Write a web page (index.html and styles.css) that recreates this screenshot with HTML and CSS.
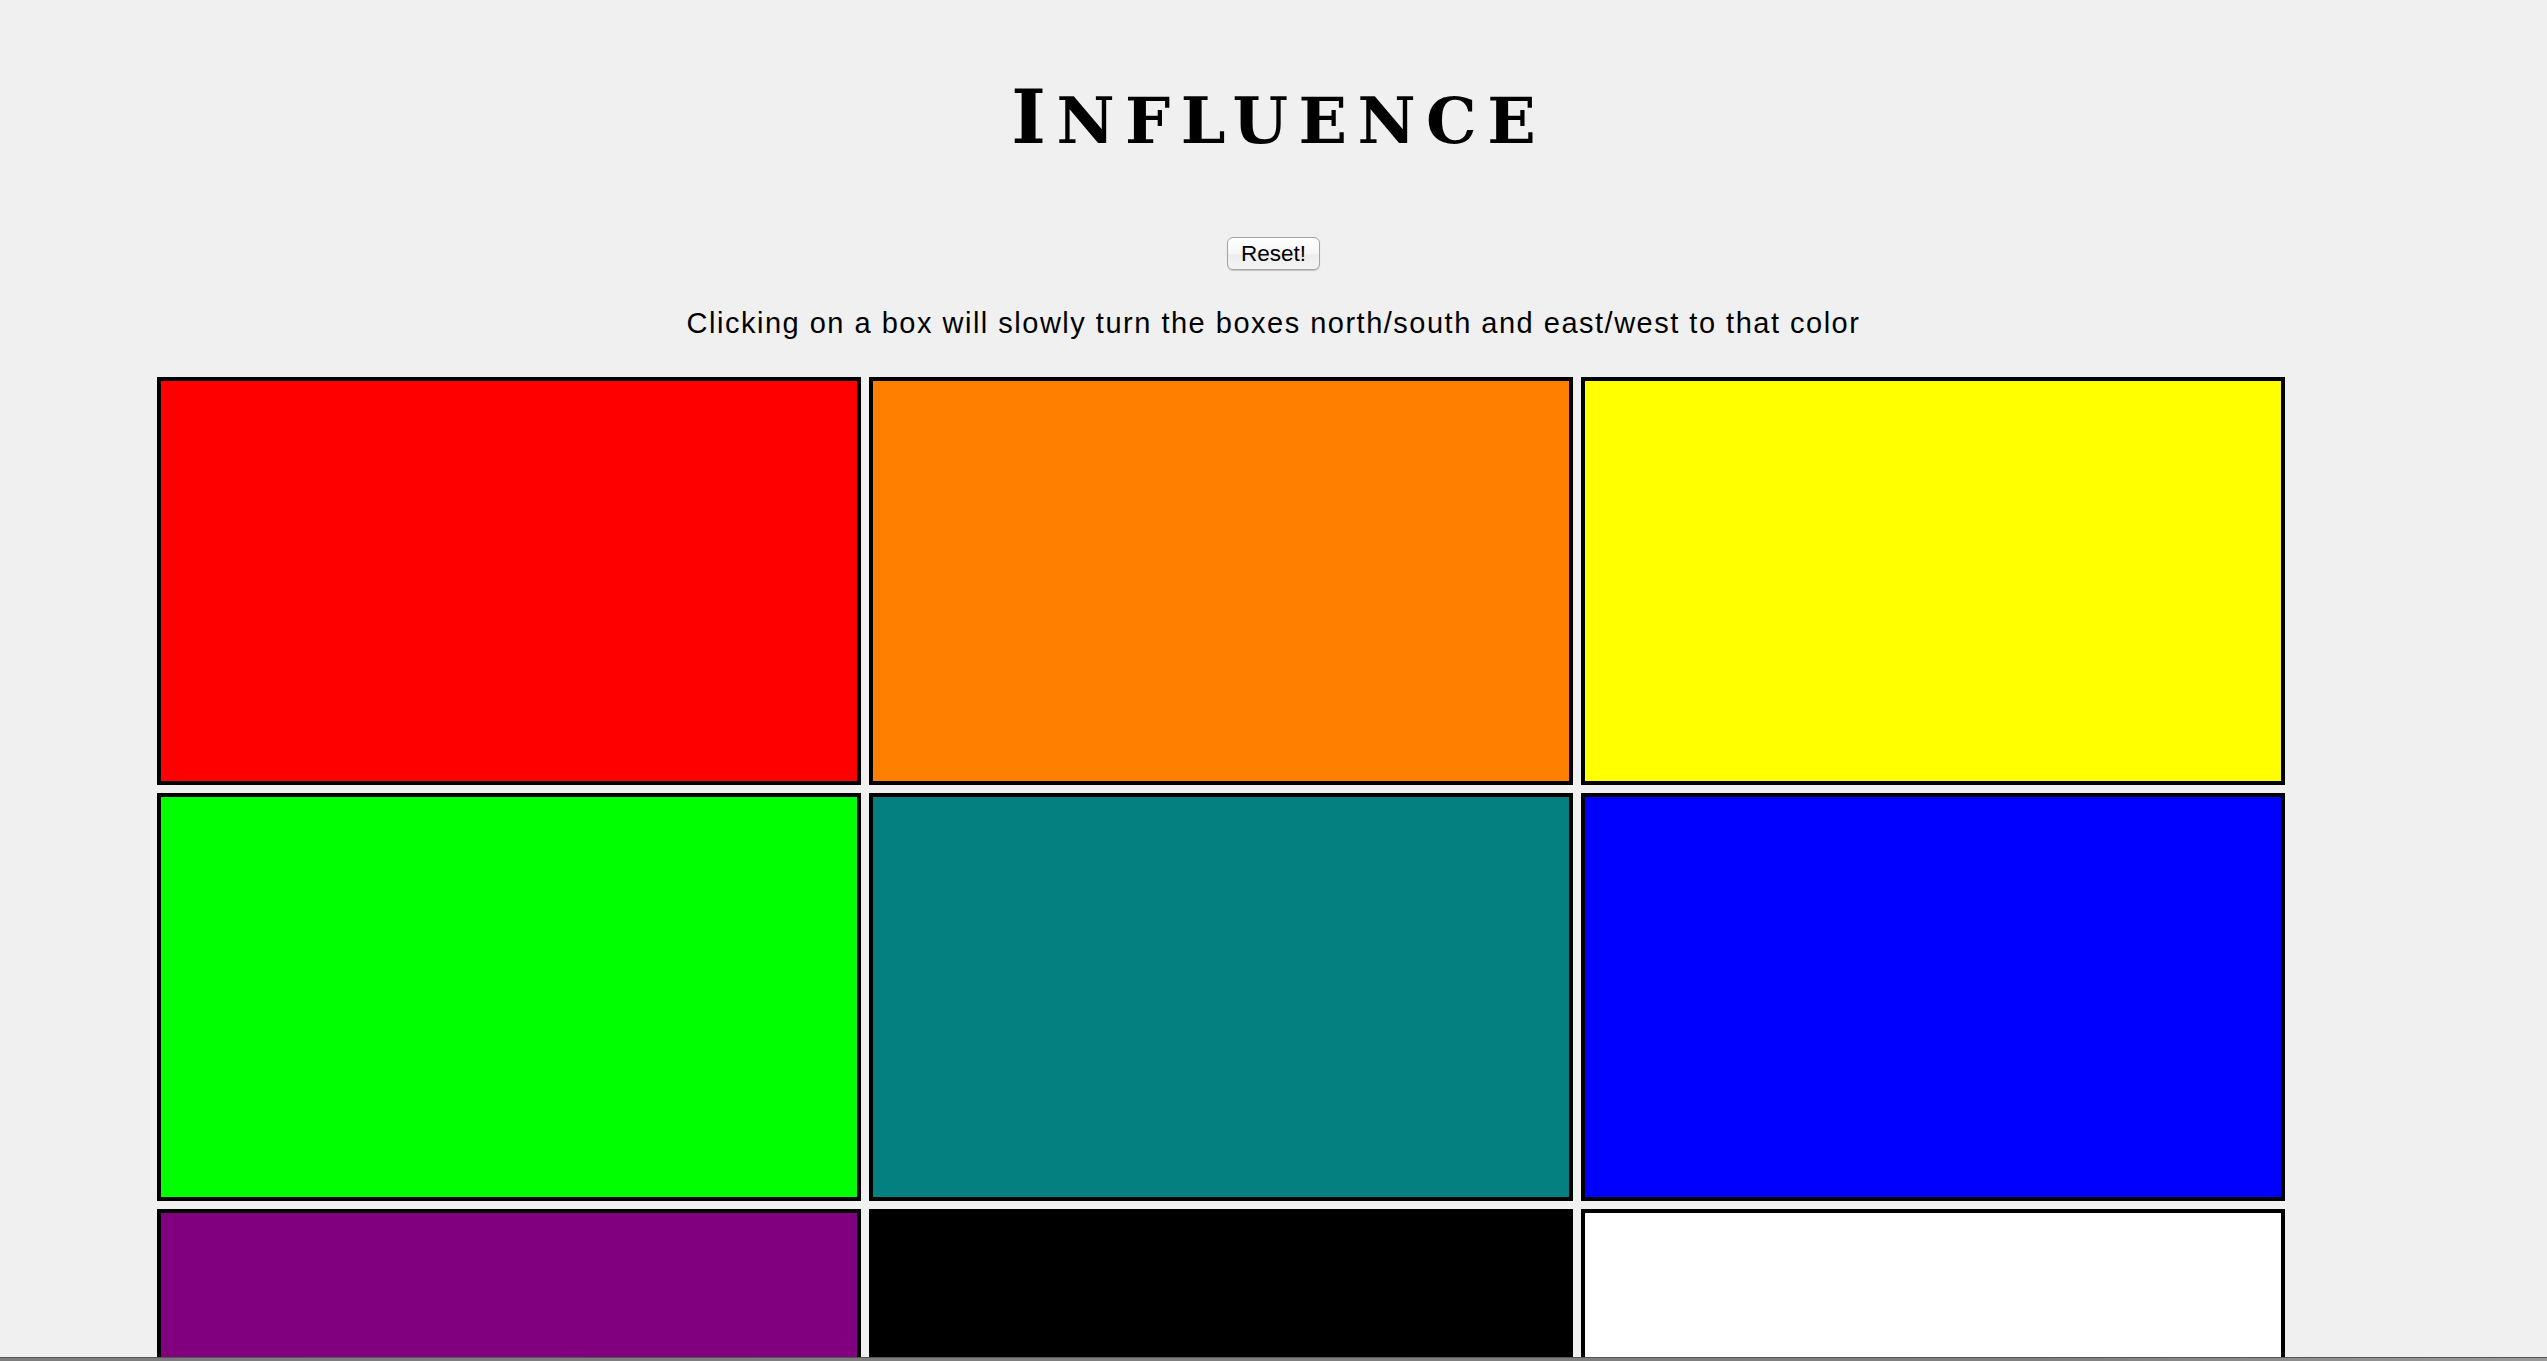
FILE: index.html
```html
<!DOCTYPE html>
<html lang="en">
<head>
<meta charset="utf-8">
<title>Influence</title>
<link rel="stylesheet" href="styles.css">
</head>
<body>
<h1 class="title">I<span class="title-sc">nfluence</span></h1>
<div class="controls"><button class="reset-btn" type="button">Reset!</button></div>
<p class="instructions">Clicking on a box will slowly turn the boxes north/south and east/west to that color</p>
<div class="board">
  <div class="box red"></div>
  <div class="box orange"></div>
  <div class="box yellow"></div>
  <div class="box green"></div>
  <div class="box teal"></div>
  <div class="box blue"></div>
  <div class="box purple"></div>
  <div class="box black"></div>
  <div class="box white"></div>
</div>
<div class="window-edge"></div>
</body>
</html>
```
FILE: styles.css
```css
html {
  overflow: hidden;
}
body {
  margin: 0;
  background: #f0f0f0;
  color: #000;
  font-family: "Liberation Sans", Arial, sans-serif;
}
.title {
  margin: 80px 0 0;
  height: 74px;
  text-align: center;
  text-indent: 10.5px;
  font-family: "DejaVu Serif", "Liberation Serif", serif;
  font-weight: bold;
  font-size: 74px;
  line-height: 74px;
  letter-spacing: 10.5px;
}
.title-sc {
  font-size: 0.86em;
  line-height: 40px;
  text-transform: uppercase;
}
.controls {
  margin-top: 83px;
  text-align: center;
  height: 33px;
}
.reset-btn {
  width: 93px;
  height: 33px;
  padding: 0;
  border: 1px solid #a3a3a3;
  border-radius: 6px;
  background: linear-gradient(#ffffff 0%, #f6f6f6 50%, #ececec 55%, #f4f4f4 100%);
  box-shadow: 0 1px 1px rgba(0, 0, 0, 0.18);
  font-family: "Liberation Sans", Arial, sans-serif;
  font-size: 22.5px;
  color: #000;
  vertical-align: top;
}
.instructions {
  margin: 39px 0 0;
  text-align: center;
  font-size: 29px;
  line-height: 28px;
  letter-spacing: 1.5px;
}
.board {
  margin: 40px 0 0 157px;
  display: grid;
  grid-template-columns: repeat(3, 704px);
  grid-auto-rows: 408px;
  gap: 8px;
}
.box {
  box-sizing: border-box;
  border: 4px solid #000;
}
.red { background: #ff0000; }
.orange { background: #ff8000; }
.yellow { background: #ffff00; }
.green { background: #00ff00; }
.teal { background: #048080; }
.blue { background: #0000ff; }
.purple { background: #800080; }
.black { background: #000000; }
.white { background: #ffffff; }
.window-edge {
  position: fixed;
  left: 0;
  right: 0;
  bottom: 0;
  height: 4px;
  border-top: 1px solid #555;
  box-sizing: border-box;
  background: linear-gradient(90deg, #7d7d7d 0%, #808080 80%, #9a9a9a 100%);
}
```
